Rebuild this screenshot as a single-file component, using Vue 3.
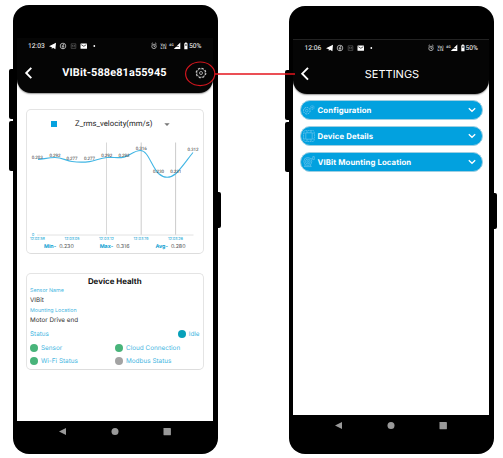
<script setup>
const points = [
  { x: 38, label: '0.283', ly: 158.3, lx: 37.3 },
  { x: 55, label: '0.292', ly: 156, lx: 55 },
  { x: 72, label: '0.277', ly: 159.800, lx: 72 },
  { x: 89.5, label: '0.277', ly: 159.800, lx: 89.5 },
  { x: 107, label: '0.292', ly: 156, lx: 106.7 },
  { x: 124, label: '0.292', ly: 156, lx: 124 },
  { x: 141, label: '0.316', ly: 149.3, lx: 141.3 },
  { x: 158.5, label: '0.230', ly: 172.3, lx: 158.5 },
  { x: 176, label: '0.231', ly: 172.3, lx: 175.7 },
  { x: 193, label: '0.312', ly: 150.500, lx: 193 },
]
const ticks = [
  { x: 37.5, label: '12:02:58' },
  { x: 72, label: '12:03:05' },
  { x: 106.5, label: '12:03:12' },
  { x: 141, label: '12:03:19' },
  { x: 175.5, label: '12:03:26' },
]
const stats = [
  { name: 'Min-', value: '0.230' },
  { name: 'Max-', value: '0.316' },
  { name: 'Avg-', value: '0.280' },
]
const health = [
  { name: 'Sensor', on: true },
  { name: 'Cloud Connection', on: true },
  { name: 'Wi-Fi Status', on: true },
  { name: 'Modbus Status', on: false },
]
const sections = [
  { name: 'Configuration', icon: 'gears' },
  { name: 'Device Details', icon: 'chip' },
  { name: 'VIBit Mounting Location', icon: 'mount' },
]
const phones = [
  { id: 'main', time: '12:03', title: 'VIBit-588e81a55945' },
  { id: 'settings', time: '12:06', title: 'SETTINGS' },
]
</script>

<template>
  <main class="canvas">
    <section v-for="p in phones" :key="p.id" class="phone" :class="p.id">
      <i class="key left upper"></i>
      <i class="key left lower"></i>
      <i class="key right"></i>
      <div class="screen">
        <header class="top">
          <div class="statusbar">
            <span class="time">{{ p.time }}</span>
            <svg class="notifs" viewBox="0 0 50 10" width="50" height="10">
              <path d="M1 5.2 8 1.8 7.4 8.2 5 6.8 3.8 8V6.2Z" fill="#fff" />
              <circle cx="15" cy="5" r="2.8" fill="none" stroke="#ccc" stroke-width=".8" />
              <path d="M15 8V4.2q0-1 1.2-.8M13.7 5.2h2.6" fill="none" stroke="#ddd" stroke-width=".8" />
              <path d="M23.2 2.8h4.6v4.6h-4.6zM24.3 6.3V4l1.2 1.4L26.7 4v2.3" fill="none" stroke="#666" stroke-width=".6" />
              <rect x="32.5" y="2.500" width="6.5" height="5.2" rx=".5" fill="#fff" />
              <path d="m33.3 3.700 2.500 1.600 2.500-1.600" fill="none" stroke="#111" stroke-width=".7" />
              <circle cx="46.300" cy="5" r=".9" fill="#fff" />
            </svg>
            <svg class="signals" viewBox="0 0 39 10" width="39" height="10">
              <circle cx="4" cy="5.400" r="2.200" fill="none" stroke="#ddd" stroke-width=".7" />
              <path d="m1.400 3 1.500-1.200M6.600 3 5.100 1.800M4 4v1.600h1" fill="none" stroke="#ddd" stroke-width=".7" />
              <text x="10.600" y="4.800" class="tiny" textLength="6">Vo)</text>
              <text x="10.600" y="8" class="tiny" textLength="6">LTE</text>
              <text x="19" y="4.600" class="tiny" textLength="4.800">4G</text>
              <path d="M30.300 1.500v6.500h-6.500Z" fill="#fff" />
              <path d="m24 5.800 3-2M26 5.500h3" stroke="#050505" stroke-width=".6" />
              <path d="M34.300 2.200h.8v-.7h1.600v.7h.8v6h-3.200z" fill="#fff" />
              <path d="M35.200 3.200h1.500v1.600h-1.500z" fill="#444" />
            </svg>
            <span class="pct">50%</span>
          </div>
          <div class="titlebar">
            <svg class="back" viewBox="0 0 9 14" width="9" height="14">
              <path v-if="p.id === 'main'" d="M7.300 1.800 2.200 7l5.100 5.200" fill="none" stroke="#fff" stroke-width="1.900" />
              <path v-else d="M8 .8 2.200 6.700 8 12.600" fill="none" stroke="#fff" stroke-width="1.900" />
            </svg>
            <h1>{{ p.title }}</h1>
            <svg v-if="p.id === 'main'" class="gear" viewBox="0 0 12 12" width="12" height="12" fill="none">
              <circle cx="6" cy="6" r="4.800" stroke="#ccc" stroke-width="1.100" stroke-dasharray="2.100 1.670" />
              <circle cx="6" cy="6" r="4.200" stroke="#bbb" stroke-width=".6" />
              <circle cx="6" cy="6" r="1.500" stroke="#ddd" stroke-width=".7" />
            </svg>
          </div>
        </header>

        <div v-if="p.id === 'main'" class="body">
          <article class="card chartcard">
            <div class="legend">
              <i class="swatch"></i>
              <span class="metric">Z_rms_velocity(mm/s)</span>
              <svg class="caret" viewBox="0 0 6 3" width="6" height="3"><path d="M.3.200h5.400L3 2.900z" fill="#777" /></svg>
            </div>
            <svg class="chart" viewBox="27 136.500 176 106" width="176" height="106">
              <g stroke="#d8d8d8" stroke-width="1">
                <path d="M106.500 142v92.500" />
                <path d="M141.200 142v92.500" stroke="#ccc" />
                <path d="M175.600 142v92.500" stroke="#ccc" />
                <path d="M37 234.500h156.500" stroke="#e2e2e2" />
              </g>
              <path
                d="M38 159C43 158.800 48 157 55 157S66 160.200 72 161C78 161.800 84 161.800 89.500 161.100S100 157.600 107 157C113 156.500 118 157.900 124 156.600C130 155 134 150 140.500 150C148 150 151 165 158.500 173Q167 180.500 176 173C183 166 188 158 193 152"
                fill="none" stroke="#42b6e4" stroke-width="1.100"
              />
              <text
                v-for="pt in points" :key="pt.x" :x="pt.lx" :y="pt.ly"
                class="plabel" text-anchor="middle" textLength="11"
              >{{ pt.label }}</text>
              <text x="31.800" y="235.900" class="axis">0</text>
              <text
                v-for="t in ticks" :key="t.x" :x="t.x" y="239.900"
                class="axis" text-anchor="middle" textLength="15"
              >{{ t.label }}</text>
            </svg>
            <div class="stats">
              <span v-for="s in stats" :key="s.name" class="stat"><b>{{ s.name }}</b><em>{{ s.value }}</em></span>
            </div>
          </article>

          <article class="card healthcard">
            <h2>Device Health</h2>
            <span class="field">Sensor Name</span>
            <span class="value">VIBit</span>
            <span class="field">Mounting Location</span>
            <span class="value">Motor Drive end</span>
            <div class="idle">
              <span>Status</span>
              <span class="state"><i class="dot teal"></i><span>Idle</span></span>
            </div>
            <div class="grid">
              <span v-for="h in health" :key="h.name" class="item">
                <i class="dot" :class="{ off: !h.on }"></i><span>{{ h.name }}</span>
              </span>
            </div>
          </article>
        </div>

        <div v-else class="menu">
          <button v-for="s in sections" :key="s.name" class="row">
            <svg class="ricon" viewBox="0 0 14 14" width="14" height="14" fill="none" stroke="#7ccaee" stroke-width=".6">
              <template v-if="s.icon === 'gears'">
                <circle cx="4.800" cy="7.700" r="3.300" stroke-width="1" stroke-dasharray="1.600 .9" />
                <circle cx="4.800" cy="7.700" r="1.300" />
                <circle cx="10.300" cy="4.500" r="1.900" stroke-dasharray="1.200 .6" />
                <circle cx="10.300" cy="4.500" r=".6" />
              </template>
              <template v-else-if="s.icon === 'chip'">
                <rect x="1.500" y="1.500" width="11" height="11" rx="2" stroke-dasharray="1.800 .5" />
                <rect x="3.800" y="3.800" width="6.400" height="6.400" rx=".8" />
                <path d="M2 4h1.800M2 10h1.800M10.200 4H12M10.200 10H12M5 2v1.800M9 2v1.800M5 10.200V12M9 10.200V12" />
              </template>
              <template v-else>
                <circle cx="5.800" cy="6.500" r="4" />
                <circle cx="5.800" cy="6.500" r="2.400" />
                <circle cx="5.800" cy="6.500" r=".9" />
                <path d="M3.400 10 2.300 11.600h7L8.300 10M9.200 3.600h1.600V1.600h1.500v3h-2" />
              </template>
            </svg>
            <span class="rname">{{ s.name }}</span>
            <svg class="chev" viewBox="0 0 8 6" width="8" height="6">
              <path d="m.8 1.200 3.200 3.100 3.200-3.100" fill="none" stroke="#fff" stroke-width="1.300" />
            </svg>
          </button>
        </div>
      </div>
      <nav class="nav">
        <svg viewBox="0 0 114 9" width="114" height="9" fill="#999">
          <path d="M8 1v7L1 4.500z" />
          <circle cx="57" cy="4.500" r="3.500" />
          <rect x="105.500" y="1" width="7.400" height="7.200" rx=".4" />
        </svg>
      </nav>
    </section>

    <svg class="callout" viewBox="0 0 110 28" width="110" height="28">
      <ellipse cx="15.200" cy="13.800" rx="14.600" ry="11.800" fill="none" stroke="#d2161e" stroke-width="1.200" />
      <path d="M30 13.900H110" stroke="#e4141c" stroke-width="1.500" />
    </svg>
  </main>
</template>

<style>
body {
  background: #fff;
}
</style>

<style scoped>
* {
  box-sizing: border-box;
}
.canvas {
  position: relative;
  display: flex;
  align-items: flex-start;
  gap: 71px;
  width: 503px;
  height: 458px;
  padding: 5px 0 0 12.500px;
  overflow: hidden;
  font-family: Inter, "Noto Sans", sans-serif;
  text-rendering: geometricPrecision;
  white-space: nowrap;
}
.phone {
  position: relative;
  flex: none;
  display: flex;
  flex-direction: column;
  width: 205px;
  height: 449px;
  padding: 33px 4.500px 0;
  border-radius: 16px;
  background: #000;
}
.phone.settings {
  height: 448px;
  margin-top: 1px;
}
.key {
  position: absolute;
  background: #000;
}
.key.left {
  left: -3.500px;
  width: 5px;
  height: 50px;
  border-radius: 2px 0 0 2px;
}
.upper {
  top: 64px;
}
.lower {
  top: 115.500px;
}
.key.right {
  right: -3px;
  top: 186.500px;
  width: 5px;
  height: 36.500px;
  border-radius: 0 2px 2px 0;
}
.screen {
  height: 382.500px;
  background: #fff;
  overflow: hidden;
}
.settings .screen {
  height: 375.500px;
}
.top {
  height: 55px;
  border-radius: 0 0 14px 14px;
  background: #050505;
  color: #fff;
  box-shadow: 0 .5px 1.500px #999;
}
.settings .top {
  height: 54.500px;
  border-top: 1px solid #222;
}
.statusbar {
  display: flex;
  align-items: center;
  height: 14px;
  padding: 1px 0 0 11px;
  font: 400 6.700px/10px Roboto, sans-serif;
}
.settings .statusbar {
  padding-left: 11.500px;
}
.time {
  width: 20px;
}
.notifs {
  flex: none;
}
.signals {
  flex: none;
  margin-left: 52px;
}
.tiny {
  font: 700 3.600px Roboto, sans-serif;
  fill: #ddd;
}
.titlebar {
  display: flex;
  align-items: center;
  height: 41px;
  padding: 0 6.500px 0 6.500px;
}
.settings .titlebar {
  height: 40px;
}
.back {
  flex: none;
}
h1 {
  width: 162px;
  margin: 0;
  padding-left: 2px;
  font: 700 10.900px/16px Roboto, sans-serif;
  letter-spacing: .12px;
  text-align: center;
}
.settings h1 {
  padding-left: 5px;
  font: 400 11px/16px Inter, sans-serif;
  letter-spacing: 0;
}
.gear {
  flex: none;
}
.body {
  display: flex;
  flex-direction: column;
  gap: 18.500px;
  padding: 15.500px 9.500px 0 9px;
}
.card {
  border: 1px solid #e4e4e4;
  border-bottom-color: #ddd;
  border-radius: 5px;
  background: #fff;
}
.chartcard {
  height: 145.500px;
}
.legend {
  display: flex;
  align-items: center;
  height: 27px;
  padding: 2px 0 0 24px;
}
.swatch {
  width: 6px;
  height: 6px;
  background: #06a2df;
}
.metric {
  width: 106.500px;
  padding-left: 18px;
  font: 400 7.750px/12px Roboto, sans-serif;
  color: #222;
}
.caret {
  flex: none;
}
.chart {
  display: block;
}
.plabel {
  font: 400 4.500px Roboto, sans-serif;
  fill: #333;
}
.axis {
  font: 400 4px Inter, sans-serif;
  fill: #2fadd9;
}
.stats {
  display: flex;
  justify-content: space-between;
  margin-top: .5px;
  padding: 0 17px;
  font-size: 5.300px;
  line-height: 9px;
}
.stat {
  display: flex;
  gap: 3px;
}
.stats b {
  color: #109fd2;
}
.stats em {
  font-style: normal;
  color: #555;
}
.healthcard {
  display: flex;
  flex-direction: column;
  height: 97px;
  padding: 1.500px 3px 0;
}
h2 {
  margin: 0;
  font-size: 7.900px;
  line-height: 12px;
  font-weight: 700;
  text-align: center;
  color: #111;
}
.field {
  height: 9px;
  font-size: 5.300px;
  line-height: 9px;
  color: #45b6df;
}
.value {
  height: 10.700px;
  font-size: 6.300px;
  line-height: 9px;
  color: #333;
}
.idle {
  display: flex;
  justify-content: space-between;
  align-items: center;
  height: 14.500px;
  margin-top: .3px;
  font-size: 6.300px;
  color: #45b6df;
}
.state {
  display: flex;
  align-items: center;
  gap: 3px;
}
.dot {
  flex: none;
  width: 8px;
  height: 8px;
  border-radius: 50%;
  background: #48b47a;
}
.dot.teal {
  background: #08a0b9;
}
.dot.off {
  background: #a3a3a3;
}
.grid {
  display: grid;
  grid-template-columns: 85px 1fr;
  grid-auto-rows: 13.400px;
  font-size: 6.400px;
  color: #45b6df;
}
.item {
  display: flex;
  align-items: center;
  gap: 3px;
}
.menu {
  display: flex;
  flex-direction: column;
  gap: 6px;
  padding: 6.500px 6px 0 6.500px;
}
.row {
  display: flex;
  align-items: center;
  height: 20px;
  padding: 0 6px 0 1.500px;
  border: 1px solid #9ecfe2;
  border-radius: 10px;
  background: #02a1df;
  color: #fff;
  font-family: inherit;
  text-rendering: geometricPrecision;
}
.ricon {
  flex: none;
}
.rname {
  flex: 1;
  padding-left: 1.500px;
  font-size: 7.750px;
  line-height: 12px;
  font-weight: 700;
  letter-spacing: .13px;
  text-align: left;
}
.nav {
  display: flex;
  justify-content: center;
  padding: 6.500px 0 0;
}
.callout {
  position: absolute;
  left: 185px;
  top: 60px;
}
</style>
